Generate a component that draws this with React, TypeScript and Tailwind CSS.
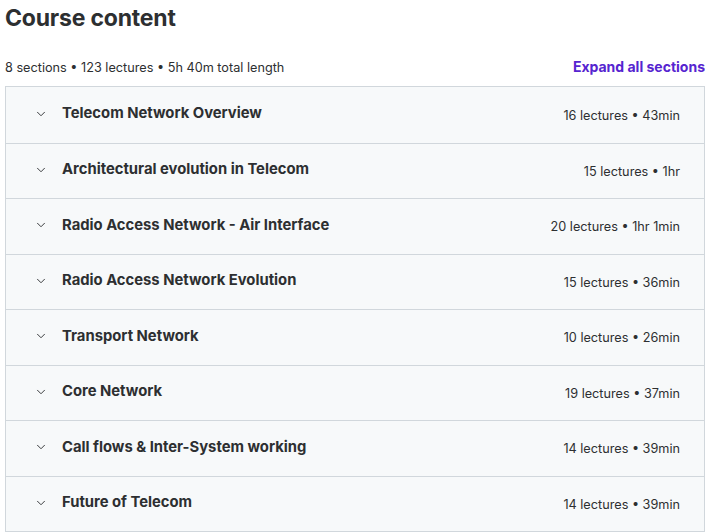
import { ChevronDown } from "lucide-react";

const sections = [
  { title: "Telecom Network Overview", meta: "16 lectures • 43min" },
  { title: "Architectural evolution in Telecom", meta: "15 lectures • 1hr" },
  { title: "Radio Access Network - Air Interface", meta: "20 lectures • 1hr 1min" },
  { title: "Radio Access Network Evolution", meta: "15 lectures • 36min" },
  { title: "Transport Network", meta: "10 lectures • 26min" },
  { title: "Core Network", meta: "19 lectures • 37min" },
  { title: "Call flows & Inter-System working", meta: "14 lectures • 39min" },
  { title: "Future of Telecom", meta: "14 lectures • 39min" },
];

export default function App() {
  return (
    <div className="w-[705px] h-[532px] overflow-hidden bg-white pl-[5px] text-[#2d2f31] font-['Inter',sans-serif]">
      <h2 className="text-[23px] font-bold leading-none pt-[7px] tracking-[-0.2px]">Course content</h2>
      <div className="flex items-end justify-between w-[700px] mt-[29px] pb-[10px]">
        <span className="text-[12.7px] leading-[16px]">8 sections • 123 lectures • 5h 40m total length</span>
        <button className="text-[14px] font-bold text-[#5624d0] leading-[16px] pb-[1px]">Expand all sections</button>
      </div>
      <div className="w-[700px] border border-[#d1d7dc]">
        {sections.map((s, i) => (
          <div
            key={s.title}
            className={`flex items-center justify-between h-[55.5px] bg-[#f7f9fa] pl-[28px] pr-[24px] ${i > 0 ? "border-t border-[#d1d7dc]" : ""}`}
          >
            <div className="flex items-center gap-[14px] -mt-[2px]">
              <ChevronDown size={14} strokeWidth={1.6} className="text-[#2d2f31]" />
              <span className="text-[14.8px] font-bold leading-none">{s.title}</span>
            </div>
            <span className="text-[12.7px] leading-none text-[#2d2f31] mt-[3px]">{s.meta}</span>
          </div>
        ))}
      </div>
    </div>
  );
}
